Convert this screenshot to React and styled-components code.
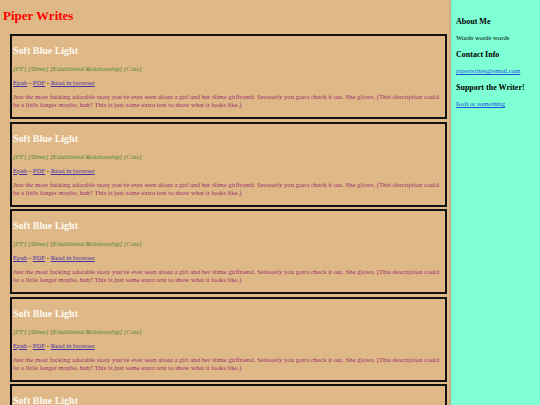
import React from 'react';
import styled, { createGlobalStyle } from 'styled-components';

const GlobalStyle = createGlobalStyle`
  html, body {
    margin: 0;
    padding: 0;
    background: #deb887;
    font-family: "Liberation Serif", "Times New Roman", serif;
  }
`;

const Page = styled.div`
  display: flex;
  min-height: 100vh;
`;

const Main = styled.main`
  flex: 1;
  background: #deb887;
  padding: 0 4px 0 3px;
`;

const Title = styled.h1`
  color: #ff0000;
  font-size: 13px;
  line-height: 15px;
  margin: 8px 0 11px;
`;

const Card = styled.section`
  border: 2px solid #111;
  margin: 0 0 2.5px 7px;
  padding: 0 1px 2px;
`;

const CardTitle = styled.h2`
  color: #fffaf0;
  font-size: 10px;
  line-height: 13px;
  margin: 8px 0;
`;

const Line = styled.p`
  font-size: 6.73px;
  line-height: 8px;
  margin: 6px 0;
  color: ${props => props.$color || '#000'};
  font-style: ${props => (props.$italic ? 'italic' : 'normal')};
`;

const Link = styled.a`
  color: #4b36a8;
`;

const Sidebar = styled.aside`
  width: 84px;
  padding: 9px 0 0 5px;
  background: #7fffd4;
  box-shadow: -1px 0 2px rgba(120, 140, 100, 0.4);
`;

const SideHeading = styled.h3`
  font-size: 8px;
  line-height: 10px;
  margin: 8px 0 7px;
  color: #000;
`;

const SideText = styled.p`
  font-size: 6.7px;
  line-height: 8px;
  margin: 7px 0;
`;

const SideLink = styled.a`
  color: #1f4fe0;
`;

const stories = Array.from({ length: 5 }, (_, i) => ({
  id: i,
  title: 'Soft Blue Light',
  tags: '[FF] [Slime] [Established Relationship] [Cute]',
  description:
    "Just the most fucking adorable story you've ever seen about a girl and her slime girlfriend. Seriously you gotta check it out. She glows. (This description could be a little longer maybe, huh? This is just some extra text to show what it looks like.)",
}));

const App = () => {
  return (
    <>
      <GlobalStyle />
      <Page>
        <Main>
          <Title>Piper Writes</Title>
          {stories.map(story => (
            <Card key={story.id}>
              <CardTitle>{story.title}</CardTitle>
              <Line $color="#4c8a1e" $italic>
                {story.tags}
              </Line>
              <Line $color="#000">
                <Link href="#">Epub</Link> - <Link href="#">PDF</Link> -{' '}
                <Link href="#">Read in browser</Link>
              </Line>
              <Line $color="#a0306e">{story.description}</Line>
            </Card>
          ))}
        </Main>
        <Sidebar>
          <SideHeading>About Me</SideHeading>
          <SideText>Words words words</SideText>
          <SideHeading>Contact Info</SideHeading>
          <SideText>
            <SideLink href="#">piperwrites@email.com</SideLink>
          </SideText>
          <SideHeading>Support the Writer!</SideHeading>
          <SideText>
            <SideLink href="#">Kofi or something</SideLink>
          </SideText>
        </Sidebar>
      </Page>
    </>
  );
};

export default App;
